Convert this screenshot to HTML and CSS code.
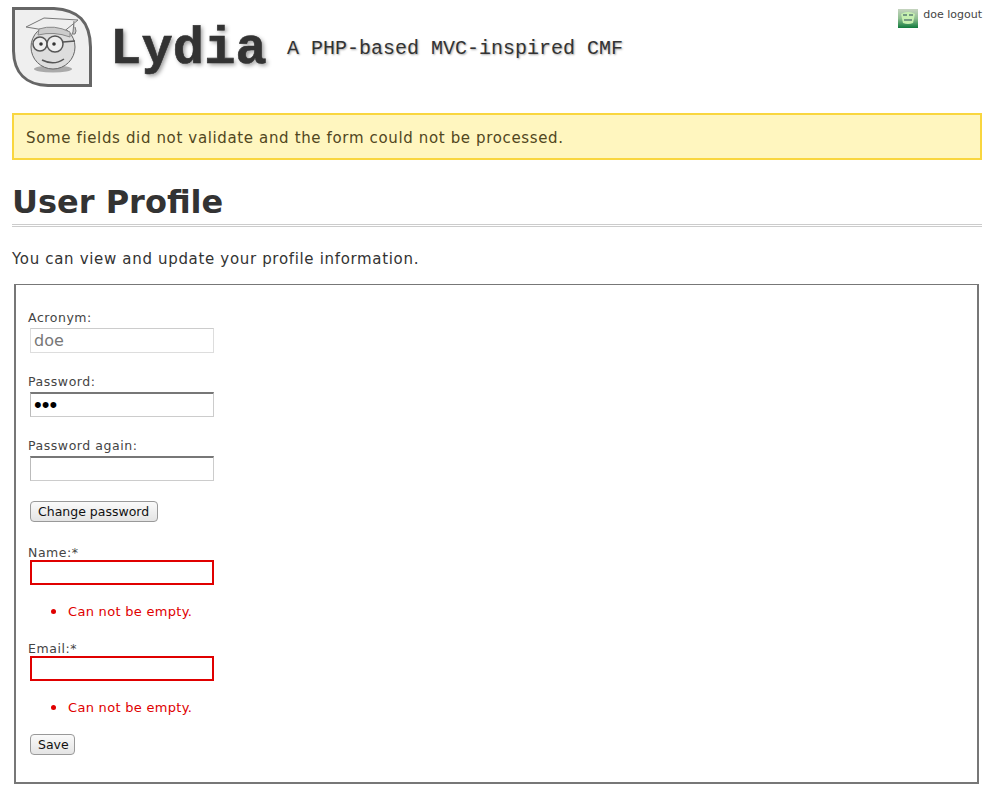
FILE: index.html
```html
<!DOCTYPE html>
<html lang="en">
<head>
<meta charset="utf-8">
<title>User Profile</title>
<link rel="stylesheet" href="styles.css">
</head>
<body>
<header class="header">
  <svg class="logo" width="80" height="80" viewBox="0 0 80 80">
    <path d="M1.500 1.500H42C66 3 78 14 78.500 40V78.500H36C14 78 2 66 1.500 44Z" fill="#efefef" stroke="#666" stroke-width="3"/>
    <ellipse cx="41" cy="62" ry="3.500" rx="19" fill="#aaa"/>
    <circle cx="41" cy="40" r="22" fill="#ddd" stroke="#666" stroke-width="1"/>
    <path d="M14 20 L32 11 L66 13 L50 26 Z" fill="#eee" stroke="#777"/>
    <path d="M27 22 Q42 17 58 25 L58 30 Q42 24 26 28 Z" fill="#ccc" stroke="#888"/>
    <path d="M62 14 L61 25 L60 27 L63 27 L64 24 L63 20" fill="#ccc" stroke="#777"/>
    <circle cx="28" cy="37" r="7" fill="#eee" stroke="#555" stroke-width="1.500"/>
    <circle cx="43" cy="37" r="8" fill="#eee" stroke="#555" stroke-width="1.500"/>
    <path d="M35 35 H36 M51 35 L63 34" stroke="#555" stroke-width="1.500"/>
    <circle cx="29" cy="37" r="1.800" fill="#333"/>
    <circle cx="42" cy="37" r="1.800" fill="#333"/>
    <path d="M30 53 Q42 59 52 52" fill="none" stroke="#555" stroke-width="1.500"/>
  </svg>
  <span class="site-title">Lydia</span>
  <span class="site-slogan">A PHP-based MVC-inspired CMF</span>
  <nav class="login-menu">
    <svg class="avatar" width="20" height="19" viewBox="0 0 20 19">
      <defs><linearGradient id="g" x1="0" y1="0" x2="0" y2="1"><stop offset="0" stop-color="#c6d4c0"/><stop offset="0.500" stop-color="#8fbf90"/><stop offset="1" stop-color="#0f7a3c"/></linearGradient></defs>
      <rect width="20" height="19" fill="url(#g)"/>
      <path d="M3 5 Q10 1 17 5 L15 14 Q10 16 5 14 Z" fill="#c6f0b0"/>
      <path d="M5 6 H9 M11 6 H15 M6 11 H14" stroke="#245" stroke-width="1.200"/>
    </svg>
    <span>doe logout</span>
  </nav>
</header>
<div class="alert">Some fields did not validate and the form could not be processed.</div>
<h1 class="page-title">User Profile</h1>
<p class="lead">You can view and update your profile information.</p>
<form class="form" onsubmit="return false">
  <div class="field">
    <label class="label" for="acronym">Acronym:</label>
    <input class="input readonly" id="acronym" type="text" value="doe" readonly>
  </div>
  <div class="field">
    <label class="label" for="pw">Password:</label>
    <input class="input password" id="pw" type="password" value="abc">
  </div>
  <div class="field">
    <label class="label" for="pw2">Password again:</label>
    <input class="input" id="pw2" type="password">
  </div>
  <div class="field field-btn"><button class="btn btn-change">Change password</button></div>
  <div class="field field-err">
    <label class="label" for="name">Name:*</label>
    <input class="input invalid" id="name" type="text">
    <ul class="errors"><li>Can not be empty.</li></ul>
  </div>
  <div class="field field-err">
    <label class="label" for="email">Email:*</label>
    <input class="input invalid" id="email" type="text">
    <ul class="errors"><li>Can not be empty.</li></ul>
  </div>
  <div class="field-save"><button class="btn btn-save">Save</button></div>
</form>
</body>
</html>
```

FILE: styles.css
```css
* { box-sizing: border-box; }
html, body { margin: 0; background: #fff; }
body {
  padding: 7px 9px 0 12px;
  font-family: "DejaVu Sans", sans-serif;
  font-size: 16px;
  color: #333;
  height: 797px;
  overflow: hidden;
}
.header {
  position: relative;
  display: flex;
  align-items: flex-start;
  height: 106px;
}
.logo { flex: none; }
.site-title {
  margin: 17px 0 0 18px;
  font-family: "Liberation Mono", monospace;
  font-weight: bold;
  font-size: 52px;
  line-height: 52px;
  letter-spacing: 0.2px;
  color: #333;
  -webkit-text-stroke: 0.6px #333;
  text-shadow: 2px 2px 4px #999;
}
.site-slogan {
  margin: 31px 0 0 20px;
  font-family: "Liberation Mono", monospace;
  font-size: 20px;
  line-height: 22px;
  color: #333;
  text-shadow: 1px 1px 2px #aaa;
}
.login-menu {
  position: absolute;
  top: 1px;
  right: 0;
  display: flex;
  gap: 5px;
  font-size: 11px;
  line-height: 14px;
  color: #444;
}
.avatar { margin-top: 1px; }
.alert {
  height: 47px;
  padding-left: 12px;
  border: 2px solid #f9d63f;
  background: #fff6bf;
  color: #514721;
  font-size: 15px;
  letter-spacing: 0.64px;
  line-height: 46px;
}
.page-title {
  margin: 22px 0 0;
  height: 45px;
  border-bottom: 3px double #ccc;
  font-size: 32px;
  line-height: 40px;
  font-weight: bold;
  color: #333;
}
.lead {
  margin: 21px 0 0;
  font-size: 15px;
  letter-spacing: 0.67px;
  line-height: 22px;
}
.form {
  margin: 14px 0 0 2px;
  width: 965px;
  height: 500px;
  padding: 25px 12px 0;
  border: 2px solid #777;
  border-width: 1.500px 2px 2px 2px;
}
.label {
  display: block;
  font-size: 12.500px;
  letter-spacing: 0.55px;
  line-height: 16px;
  color: #444;
}
.field { height: 64px; }
.field-btn { height: 44px; margin-top: -1px; padding: 0 0 0 2px; }
.field-err { height: 96px; }
.input {
  display: block;
  width: 184px;
  height: 25px;
  margin: 2px 0 0 2px;
  padding: 0 3px;
  border: 1px solid #ccc;
  border-top: 2px solid #777;
  border-left-color: #bbb;
  background: #fff;
  font-family: "DejaVu Sans", sans-serif;
  font-size: 16px;
  color: #000;
  outline: none;
}
.password { font-family: "Liberation Sans", sans-serif; font-size: 22px; }
.readonly { border: 1px solid #ddd; border-top-color: #ccc; color: #777; }
.invalid { border: 2px solid #e00000; margin-top: -1px; }
.errors {
  margin: 17px 0 0;
  padding: 0 0 0 40px;
  font-size: 13px;
  letter-spacing: 0.3px;
  line-height: 16px;
  color: #e00000;
}
.errors li::marker { font-size: 17px; }
.btn {
  display: block;
  height: 21px;
  padding: 0 7px;
  border: 1px solid #999;
  border-radius: 4px;
  background: linear-gradient(#fafafa, #e4e4e4);
  font-family: "DejaVu Sans", sans-serif;
  font-size: 12.500px;
  line-height: 18px;
  color: #111;
}
.btn-change { padding-right: 8px; }
.btn-save { padding-right: 5px; }
.field-save { margin-top: -3px; padding-left: 2px; }
```
